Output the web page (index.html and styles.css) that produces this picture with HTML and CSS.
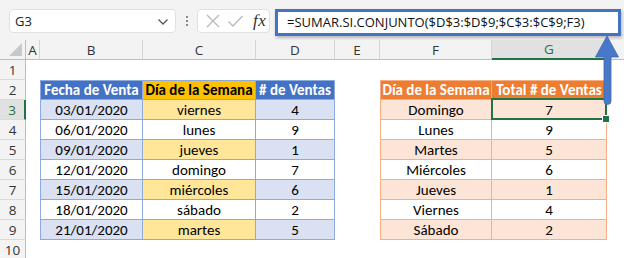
FILE: index.html
```html
<!DOCTYPE html>
<html lang="es">
<head>
<meta charset="utf-8">
<title>SUMAR.SI.CONJUNTO</title>
<link rel="stylesheet" href="styles.css">
</head>
<body>
<div class="app">
  <div class="fbar">
    <div class="namebox">
      <span class="nb-text">G3</span>
      <svg class="chev" width="12" height="8" viewBox="0 0 12 8"><path d="M1.5 1.5 L6 6 L10.5 1.5" fill="none" stroke="#555" stroke-width="1.3"/></svg>
    </div>
    <div class="dots"><i></i><i></i><i></i></div>
    <div class="fxbox">
      <svg class="ico" width="16" height="16" viewBox="0 0 16 16"><path d="M2 2 L14 14 M14 2 L2 14" stroke="#b8b8b8" stroke-width="1.3" fill="none"/></svg>
      <svg class="ico" width="17" height="16" viewBox="0 0 17 16"><path d="M1.5 8.5 L6 13 L15.5 3" stroke="#b8b8b8" stroke-width="1.3" fill="none"/></svg>
      <span class="fx">fx</span>
    </div>
    <div class="formula">=SUMAR.SI.CONJUNTO($D$3:$D$9;$C$3:$C$9;F3)</div>
  </div>

  <div class="sheet">
    <!-- header row -->
    <div class="ch corner"></div>
    <div class="ch">A</div>
    <div class="ch">B</div>
    <div class="ch">C</div>
    <div class="ch">D</div>
    <div class="ch">E</div>
    <div class="ch">F</div>
    <div class="ch sel">G</div>
    <div class="ch last"></div>

    <!-- row 1 -->
    <div class="rh">1</div>
    <div></div><div></div><div></div><div></div><div></div><div></div><div></div><div></div>

    <!-- row 2 -->
    <div class="rh">2</div>
    <div></div>
    <div class="t1 th blue first top">Fecha de Venta</div>
    <div class="t1 th gold top">Día de la Semana</div>
    <div class="t1 th blue top">
      # de Ventas</div>
    <div></div>
    <div class="t2 th orange first top">Día de la Semana</div>
    <div class="t2 th orange top">Total # de Ventas</div>
    <div></div>

    <!-- row 3 -->
    <div class="rh rsel">3</div>
    <div></div>
    <div class="t1 lb first">03/01/2020</div>
    <div class="t1 ly">viernes</div>
    <div class="t1 lb">4</div>
    <div></div>
    <div class="t2 lo first">Domingo</div>
    <div class="t2 lo active">7</div>
    <div></div>

    <!-- row 4 -->
    <div class="rh">4</div>
    <div></div>
    <div class="t1 first">06/01/2020</div>
    <div class="t1">lunes</div>
    <div class="t1">9</div>
    <div></div>
    <div class="t2 first">Lunes</div>
    <div class="t2">9</div>
    <div></div>

    <!-- row 5 -->
    <div class="rh">5</div>
    <div></div>
    <div class="t1 lb first">09/01/2020</div>
    <div class="t1 ly">jueves</div>
    <div class="t1 lb">1</div>
    <div></div>
    <div class="t2 lo first">Martes</div>
    <div class="t2 lo">5</div>
    <div></div>

    <!-- row 6 -->
    <div class="rh">6</div>
    <div></div>
    <div class="t1 first">12/01/2020</div>
    <div class="t1">domingo</div>
    <div class="t1">7</div>
    <div></div>
    <div class="t2 first">Miércoles</div>
    <div class="t2">6</div>
    <div></div>

    <!-- row 7 -->
    <div class="rh">7</div>
    <div></div>
    <div class="t1 lb first">15/01/2020</div>
    <div class="t1 ly">miércoles</div>
    <div class="t1 lb">6</div>
    <div></div>
    <div class="t2 lo first">Jueves</div>
    <div class="t2 lo">1</div>
    <div></div>

    <!-- row 8 -->
    <div class="rh">8</div>
    <div></div>
    <div class="t1 first">18/01/2020</div>
    <div class="t1">sábado</div>
    <div class="t1">2</div>
    <div></div>
    <div class="t2 first">Viernes</div>
    <div class="t2">4</div>
    <div></div>

    <!-- row 9 -->
    <div class="rh">9</div>
    <div></div>
    <div class="t1 lb first">21/01/2020</div>
    <div class="t1 ly">martes</div>
    <div class="t1 lb">5</div>
    <div></div>
    <div class="t2 lo first">Sábado</div>
    <div class="t2 lo">2</div>
    <div></div>

    <!-- row 10 -->
    <div class="rh">10</div>
    <div></div><div></div><div></div><div></div><div></div><div></div><div></div><div></div>
  </div>

  <svg class="arrow" width="28" height="72" viewBox="0 0 28 72">
    <path d="M13 1 L24.5 22 L17 22 L17 66 A3.5 3.5 0 0 1 10 66 L10 22 L1.5 22 Z" fill="#4a78c8" stroke="#3f68b0" stroke-width="0.8" stroke-linejoin="round"/>
  </svg>
</div>
</body>
</html>
```

FILE: styles.css
```css
* { box-sizing: border-box; }
html, body { margin: 0; padding: 0; background: #ffffff; }
body { width: 624px; height: 258px; overflow: hidden; }

.app {
  position: relative;
  width: 624px;
  height: 258px;
  overflow: hidden;
  font-family: "Open Sans", "Noto Sans", sans-serif;
}

/* formula bar */
.fbar {
  height: 40px;
  background: #f3f3f3;
  display: flex;
  align-items: flex-start;
  padding: 9px 0 0 9px;
}
.namebox {
  width: 167px;
  height: 24px;
  background: #fff;
  border: 1px solid #e0e0e0;
  border-radius: 4px;
  display: flex;
  align-items: center;
  justify-content: space-between;
  padding: 0 6px 0 5px;
  font-size: 13px;
  color: #222;
}
.chev { margin-top: 1px; }
.dots {
  width: 21px;
  height: 24px;
  display: flex;
  flex-direction: column;
  align-items: center;
  justify-content: center;
  gap: 2px;
}
.dots i {
  display: block;
  width: 2px;
  height: 2px;
  background: #8a8a8a;
}
.fxbox {
  width: 73px;
  height: 24px;
  background: #fff;
  border: 1px solid #e0e0e0;
  border-radius: 4px;
  display: flex;
  align-items: center;
  padding: 0 0 0 7px;
  gap: 6px;
}
.fx {
  font-family: "Liberation Serif", "DejaVu Serif", serif;
  font-style: italic;
  font-size: 17px;
  color: #333;
  margin-left: 3px;
  letter-spacing: 0.5px;
}
.formula {
  margin-left: 5px;
  width: 346px;
  height: 27px;
  background: #fff;
  border: 3px solid #4472c4;
  box-shadow: 1px 2px 3px rgba(0,0,0,0.25);
  padding: 0 0 0 9px;
  font-size: 13px;
  line-height: 21px;
  color: #111;
  white-space: nowrap;
  overflow: hidden;
}

/* sheet grid */
.sheet {
  display: grid;
  grid-template-columns: 26px 14px 103px 113px 79px 45px 112px 115px 17px;
  grid-auto-rows: 20px;
  font-family: Carlito, Lato, "Liberation Sans", sans-serif;
  font-size: 15px;
  color: #000;
}
.sheet > div {
  display: flex;
  align-items: center;
  justify-content: center;
  white-space: nowrap;
  overflow: hidden;
}

.ch {
  background: #f3f3f3;
  border-right: 1px solid #d4d4d4;
  border-bottom: 1px solid #bdbdbd;
  font-family: "Open Sans", "Noto Sans", sans-serif;
  font-size: 13.5px;
  color: #333;
}
.ch.corner {
  position: relative;
  border-right: 1px solid #bdbdbd;
}
.ch.corner::after {
  content: "";
  position: absolute;
  right: 3px;
  bottom: 3px;
  width: 0;
  height: 0;
  border-left: 13px solid transparent;
  border-bottom: 13px solid #c8c8c8;
}
.ch.sel {
  background: #e1e1e1;
  border-bottom: 2px solid #217346;
  color: #217346;
}
.ch.last { border-right: none; }

.rh {
  background: #f3f3f3;
  border-right: 1px solid #bdbdbd;
  border-bottom: 1px solid #dadada;
  font-family: "Open Sans", "Noto Sans", sans-serif;
  font-size: 13.5px;
  color: #333;
}
.rh.rsel {
  background: #e1e1e1;
  border-right: 2px solid #217346;
  color: #217346;
}

/* tables */
.t1 { border-right: 1px solid #8ea9db; border-bottom: 1px solid #8ea9db; }
.t2 { border-right: 1px solid #f4b084; border-bottom: 1px solid #f4b084; }
.t1.first { border-left: 1px solid #8ea9db; }
.t2.first { border-left: 1px solid #f4b084; }
.t1.top { border-top: 1px solid #8ea9db; }
.t2.top { border-top: 1px solid #f4b084; }

.th { font-weight: bold; }
.blue { background: #4472c4; color: #fff; }
.gold { background: #ffc000; color: #000; }
.orange { background: #ed7d31; color: #fff; }
.lb { background: #d9e1f2; }
.ly { background: #ffe699; }
.lo { background: #fce4d6; }

.sheet > .active {
  position: relative;
  overflow: visible;
}
.active::after {
  content: "";
  position: absolute;
  left: -1px;
  top: -2px;
  right: -1px;
  bottom: -1px;
  border: 2px solid #217346;
}
.active::before {
  content: "";
  position: absolute;
  right: -4px;
  bottom: -4px;
  width: 6px;
  height: 6px;
  background: #217346;
  border: 1px solid #fff;
  z-index: 2;
}

.arrow {
  position: absolute;
  left: 594px;
  top: 35px;
}
```
